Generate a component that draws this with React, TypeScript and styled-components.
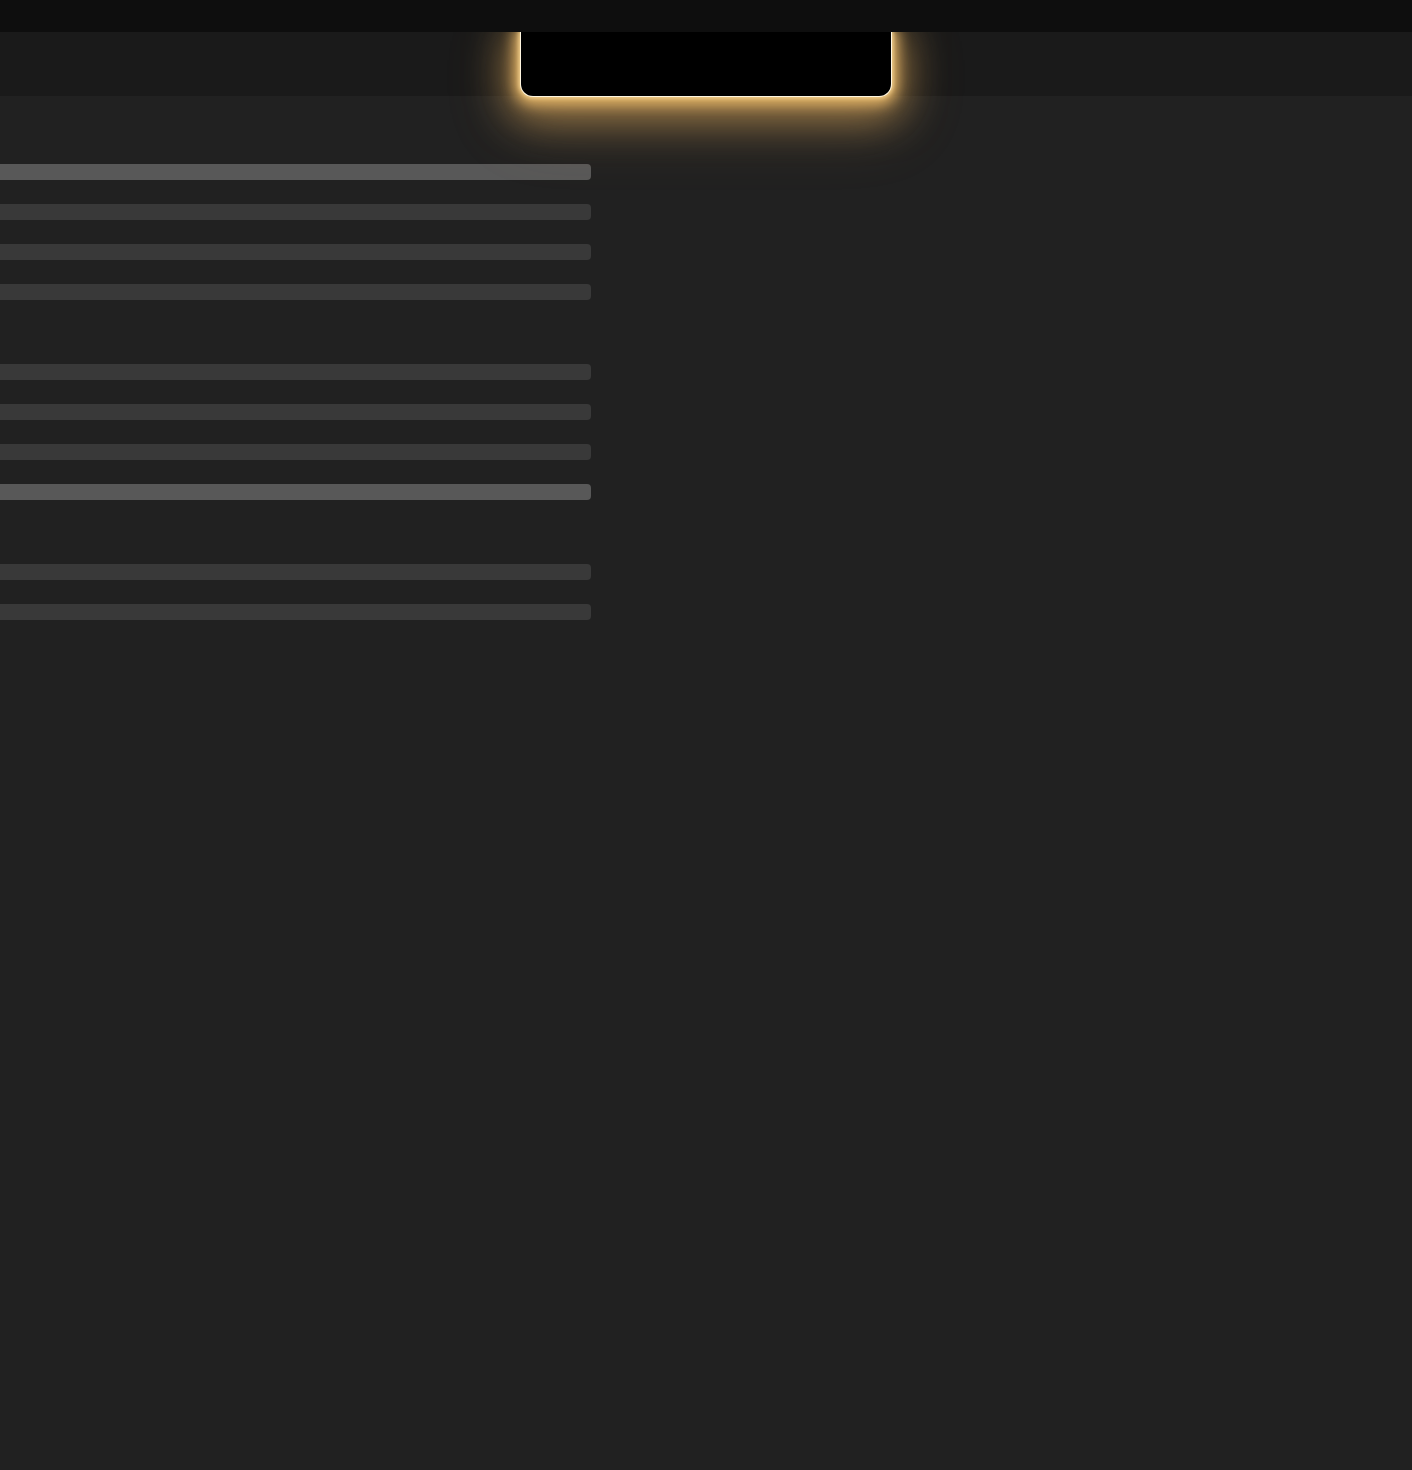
import React from "react";
import styled, { createGlobalStyle } from "styled-components";

const GlobalStyle = createGlobalStyle`
  html, body {
    margin: 0;
    padding: 0;
    background: #212121;
    font-family: "Inter", "Liberation Sans", sans-serif;
  }
`;

const groups: { tone: "light" | "dark" }[][] = [
  [{ tone: "light" }, { tone: "dark" }, { tone: "dark" }, { tone: "dark" }],
  [{ tone: "dark" }, { tone: "dark" }, { tone: "dark" }, { tone: "light" }],
  [{ tone: "dark" }, { tone: "dark" }],
];

const App = () => {
  return (
    <Page>
      <GlobalStyle />
      <TopBar />
      <Header>
        <Notch />
      </Header>
      <Content>
        {groups.map((group, gi) => (
          <Group key={gi}>
            {group.map((bar, bi) => (
              <Bar key={bi} tone={bar.tone} />
            ))}
          </Group>
        ))}
      </Content>
    </Page>
  );
};

export default App;

const Page = styled.div`
  min-height: 1470px;
  background: #212121;
  display: flex;
  flex-direction: column;
`;

const TopBar = styled.div`
  height: 32px;
  background: #0e0e0e;
  position: relative;
  z-index: 3;
`;

const Header = styled.div`
  position: relative;
  height: 64px;
  background: #1a1a1a;
  display: flex;
  justify-content: center;
  z-index: 2;
`;

const Notch = styled.div`
  width: 370px;
  height: 64px;
  background: #000;
  border-radius: 0 0 12px 12px;
  box-shadow:
    0 0 0 1px #fff6e0,
    0 0 4px 2px rgba(246, 214, 150, 1),
    0 2px 14px 6px rgba(228, 180, 102, 1),
    0 10px 40px 12px rgba(218, 168, 92, 0.65),
    0 18px 64px 14px rgba(200, 150, 80, 0.2);
`;

const Content = styled.div`
  padding-top: 68px;
  width: 591px;
  display: flex;
  flex-direction: column;
  gap: 64px;
`;

const Group = styled.div`
  display: flex;
  flex-direction: column;
  gap: 24px;
`;

const Bar = styled.div<{ tone: "light" | "dark" }>`
  height: 16px;
  border-radius: 0 4px 4px 0;
  background: ${(p) => (p.tone === "light" ? "#585858" : "#393939")};
`;
